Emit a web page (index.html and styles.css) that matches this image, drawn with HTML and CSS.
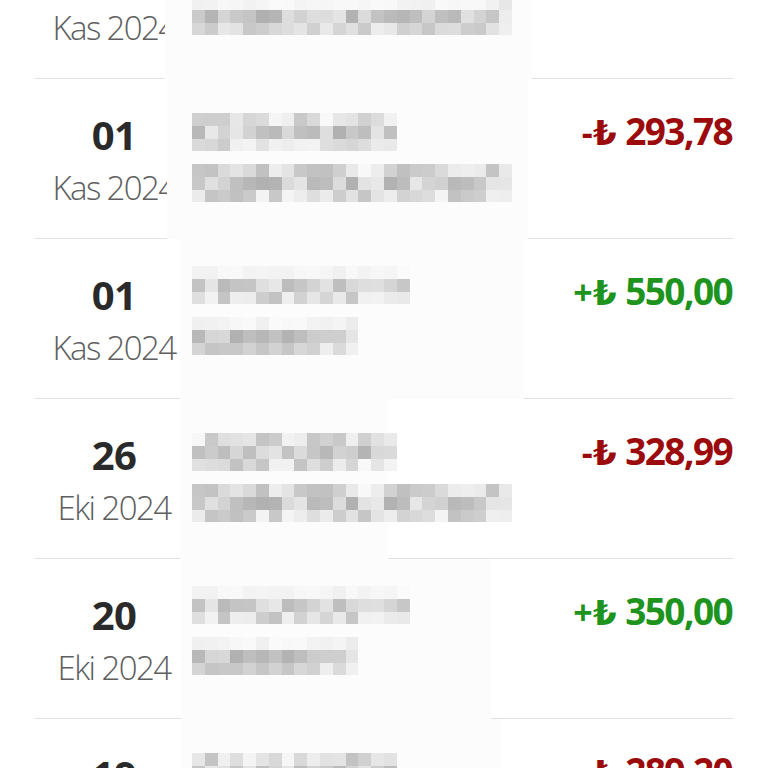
FILE: index.html
```html
<!DOCTYPE html>
<html lang="tr">
<head>
    <meta charset="UTF-8">
    <meta name="viewport" content="width=device-width, initial-scale=1.0">
    <title>Hesap Hareketleri</title>
    <link rel="stylesheet" href="styles.css">
</head>
<body>
    <div id="txList">

        <div class="txRow">
            <div class="redact r0"></div>
            <div class="txDate">
                <div class="txDay">04</div>
                <div class="txMonth">Kas 2024</div>
            </div>
            <div class="txDesc lowGrid">
                <div class="mosaic" data-cols="16" data-seed="11" data-faint="1"></div>
                <div class="mosaic" data-cols="24" data-tail="1" data-seed="12" data-faint="1"></div>
            </div>
            <div class="txAmount minus"><span class="cur">-₺</span> 120,00</div>
        </div>

        <div class="txRow">
            <div class="redact r1"></div>
            <div class="txDate">
                <div class="txDay">01</div>
                <div class="txMonth">Kas 2024</div>
            </div>
            <div class="txDesc">
                <div class="mosaic" data-cols="16" data-seed="21"></div>
                <div class="mosaic" data-cols="24" data-tail="1" data-seed="22"></div>
            </div>
            <div class="txAmount minus"><span class="cur">-₺</span> 293,78</div>
        </div>

        <div class="txRow">
            <div class="redact r2"></div>
            <div class="txDate">
                <div class="txDay">01</div>
                <div class="txMonth">Kas 2024</div>
            </div>
            <div class="txDesc lowGrid">
                <div class="mosaic" data-cols="17" data-seed="31" data-faint="1"></div>
                <div class="mosaic" data-cols="12" data-tail="1" data-seed="32" data-faint="1"></div>
            </div>
            <div class="txAmount plus"><span class="cur">+₺</span> 550,00</div>
        </div>

        <div class="txRow">
            <div class="redact r3"></div>
            <div class="txDate">
                <div class="txDay">26</div>
                <div class="txMonth">Eki 2024</div>
            </div>
            <div class="txDesc">
                <div class="mosaic" data-cols="16" data-seed="41"></div>
                <div class="mosaic" data-cols="24" data-tail="1" data-seed="22"></div>
            </div>
            <div class="txAmount minus"><span class="cur">-₺</span> 328,99</div>
        </div>

        <div class="txRow">
            <div class="redact r4"></div>
            <div class="txDate">
                <div class="txDay">20</div>
                <div class="txMonth">Eki 2024</div>
            </div>
            <div class="txDesc lowGrid">
                <div class="mosaic" data-cols="17" data-seed="31" data-faint="1"></div>
                <div class="mosaic" data-cols="12" data-tail="1" data-seed="32" data-faint="1"></div>
            </div>
            <div class="txAmount plus"><span class="cur">+₺</span> 350,00</div>
        </div>

        <div class="txRow">
            <div class="redact r5"></div>
            <div class="txDate">
                <div class="txDay">19</div>
                <div class="txMonth">Eki 2024</div>
            </div>
            <div class="txDesc">
                <div class="mosaic" data-cols="16" data-seed="61"></div>
                <div class="mosaic" data-cols="22" data-seed="62"></div>
            </div>
            <div class="txAmount minus"><span class="cur">-₺</span> 289,20</div>
        </div>

    </div>

    <script>
        // the descriptions are hidden behind a pixel mosaic, like in the screenshot
        const BLOCK = 12.8;

        function makeRandom(seed) {
            let s = seed * 9301 + 49297;
            return function () {
                s = (s * 9301 + 49297) % 233280;
                return s / 233280;
            };
        }

        function grey(value) {
            const v = Math.round(value);
            return `rgb(${v},${v},${v})`;
        }

        document.querySelectorAll(".mosaic").forEach(function (box) {
            const cols = Number(box.dataset.cols);
            const tail = Number(box.dataset.tail || 0);
            const faint = box.dataset.faint === "1";
            const rnd = makeRandom(Number(box.dataset.seed));
            const total = cols + tail;

            let rects = "";
            for (let y = 0; y < 3; y++) {
                for (let x = 0; x < total; x++) {
                    let shade = 176 + rnd() * 56;
                    if (y === 0 && faint) {
                        shade = 240 + rnd() * 10;
                    } else if (y === 0 || y === 2) {
                        shade += 16;
                    }
                    if (x >= cols) {
                        shade = 228 + rnd() * 14;
                    }
                    rects += `<rect x="${x}" y="${y}" width="1" height="1" fill="${grey(shade)}"/>`;
                }
            }

            box.innerHTML = `<svg width="${total * BLOCK}" height="${3 * BLOCK}" viewBox="0 0 ${total} 3" shape-rendering="crispEdges">${rects}</svg>`;
        });
    </script>
</body>
</html>
```

FILE: styles.css
```css
body {
    margin: 0;
    background-color: #ffffff;
    font-family: "Open Sans", "DejaVu Sans", sans-serif;
    overflow: hidden;
}

#txList {
    margin-top: -81px;
    padding: 0 34px;
}

.txRow {
    position: relative;
    box-sizing: border-box;
    height: 160px;
    border-bottom: 1px solid #e2e2e2;
    display: flex;
    flex-direction: row;
    align-items: flex-start;
}

.redact {
    position: absolute;
    top: 0;
    bottom: -1px;
    background-color: #fcfcfc;
    z-index: 1;
}

.r0 { left: 131px; width: 367px; }
.r1 { left: 133px; width: 361px; }
.r2 { left: 146px; width: 344px; }
.r3 { left: 146px; width: 208px; }
.r4 { left: 148px; width: 309px; }
.r5 { left: 148px; width: 320px; }

.txDate {
    width: 160px;
    flex-shrink: 0;
    padding-top: 36px;
    text-align: center;
}

.txDay {
    font-size: 40px;
    line-height: 40px;
    font-weight: 700;
    letter-spacing: -0.5px;
    color: #2a2a2a;
}

.txMonth {
    margin-top: 13px;
    font-size: 33px;
    line-height: 40px;
    font-weight: 300;
    letter-spacing: -1.6px;
    color: #5e5e5e;
}

.txDesc {
    position: relative;
    z-index: 2;
    flex: 1;
    margin-left: -2px;
    padding-top: 33.5px;
    display: flex;
    flex-direction: column;
    gap: 12.8px;
}

.txDesc.lowGrid {
    padding-top: 26.5px;
}

.mosaic {
    height: 38.4px;
    line-height: 0;
}

.txAmount {
    padding-top: 32px;
    font-size: 37px;
    line-height: 40px;
    font-weight: 700;
    letter-spacing: -1.6px;
    white-space: nowrap;
    margin-right: 2px;
}

.cur {
    font-size: 34px;
    letter-spacing: 0.5px;
}

.minus {
    color: #9c0b0b;
}

.plus {
    color: #1e941e;
}
```
